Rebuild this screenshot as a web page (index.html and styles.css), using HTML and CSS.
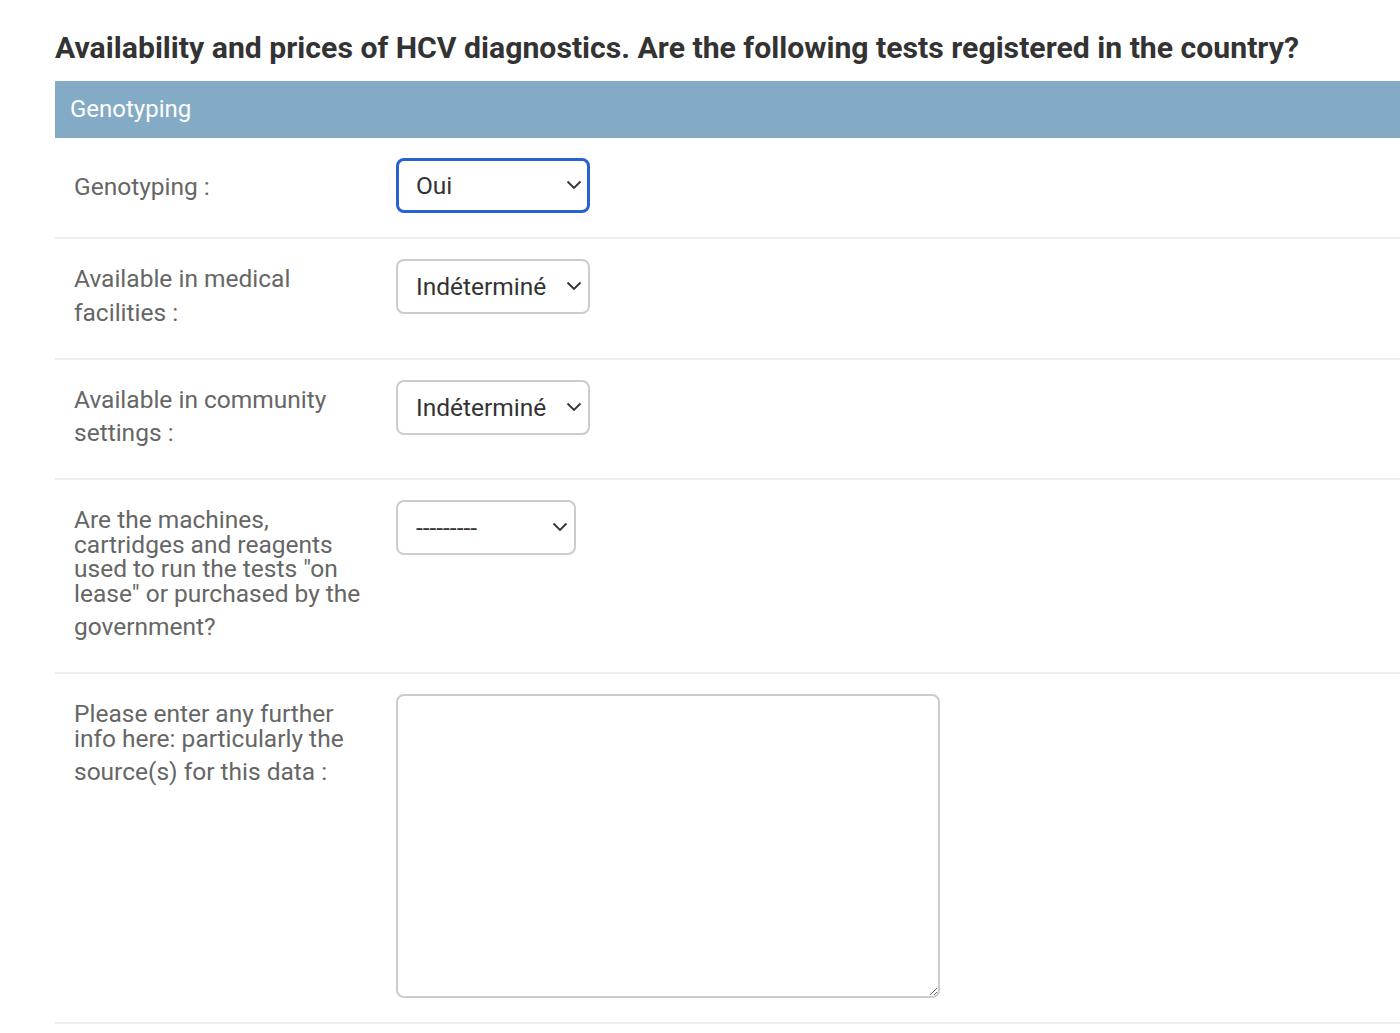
FILE: index.html
```html
<!DOCTYPE html>
<html lang="en">
<head>
<meta charset="utf-8">
<title>HCV diagnostics</title>
<link rel="stylesheet" href="styles.css">
</head>
<body>
<div class="page">
  <h1 class="title">Availability and prices of HCV diagnostics. Are the following tests registered in the country?</h1>
  <fieldset class="module">
    <h2 class="caption">Genotyping</h2>

    <div class="row">
      <label class="label"><span class="l-last">Genotyping :</span></label>
      <div class="select-wrap w194">
        <select class="select focused"><option>Oui</option><option>Non</option><option>Indéterminé</option></select>
        <svg class="chev" viewBox="0 0 16 10" width="16" height="10"><path d="M1.5 1.5 L8 8 L14.5 1.5" fill="none" stroke="#333" stroke-width="1.8"/></svg>
      </div>
    </div>

    <div class="row">
      <label class="label"><span class="l-line">Available in medical</span><span class="l-last">facilities :</span></label>
      <div class="select-wrap w194">
        <select class="select"><option>Indéterminé</option><option>Oui</option><option>Non</option></select>
        <svg class="chev" viewBox="0 0 16 10" width="16" height="10"><path d="M1.5 1.5 L8 8 L14.5 1.5" fill="none" stroke="#333" stroke-width="1.8"/></svg>
      </div>
    </div>

    <div class="row">
      <label class="label"><span class="l-line">Available in community</span><span class="l-last">settings :</span></label>
      <div class="select-wrap w194">
        <select class="select"><option>Indéterminé</option><option>Oui</option><option>Non</option></select>
        <svg class="chev" viewBox="0 0 16 10" width="16" height="10"><path d="M1.5 1.5 L8 8 L14.5 1.5" fill="none" stroke="#333" stroke-width="1.8"/></svg>
      </div>
    </div>

    <div class="row">
      <label class="label"><span class="l-line">Are the machines,</span><span class="l-line">cartridges and reagents</span><span class="l-line">used to run the tests "on</span><span class="l-line">lease" or purchased by the</span><span class="l-last">government?</span></label>
      <div class="select-wrap w180">
        <select class="select"><option>---------</option><option>On lease</option><option>Purchased</option></select>
        <svg class="chev" viewBox="0 0 16 10" width="16" height="10"><path d="M1.5 1.5 L8 8 L14.5 1.5" fill="none" stroke="#333" stroke-width="1.8"/></svg>
      </div>
    </div>

    <div class="row">
      <label class="label"><span class="l-line">Please enter any further</span><span class="l-line">info here: particularly the</span><span class="l-last">source(s) for this data :</span></label>
      <textarea class="textarea"></textarea>
    </div>
  </fieldset>
</div>
</body>
</html>
```
FILE: styles.css
```css
html, body {
  margin: 0;
  padding: 0;
  background: #fff;
}

body {
  font-family: Roboto, "Liberation Sans", Arial, sans-serif;
  color: #333;
}

.page {
  padding: 30px 0 0 55px;
}

.title {
  margin: 0 0 16px 0;
  font-size: 30.2px;
  line-height: 35px;
  font-weight: 700;
  color: #333;
  white-space: nowrap;
}

.module {
  margin: 0;
  padding: 0;
  border: none;
  min-width: 0;
}

.caption {
  margin: 0;
  height: 57px;
  line-height: 57px;
  padding: 0 0 0 15px;
  background: #84abc5;
  color: #fff;
  font-size: 24px;
  font-weight: 400;
}

.row {
  display: flex;
  align-items: flex-start;
  padding: 20px 0 21px 19px;
  border-bottom: 2px solid #eee;
}

.label {
  display: flex;
  flex-direction: column;
  width: 302px;
  flex: 0 0 302px;
  padding: 8px 20px 4px 0;
  font-size: 24.5px;
  color: #666;
}

.l-line {
  display: block;
  line-height: 24.5px;
  white-space: nowrap;
}

.l-last {
  display: block;
  line-height: 41px;
  white-space: nowrap;
}

.select-wrap {
  position: relative;
  margin-bottom: 3px;
}

.w194 { width: 194px; }
.w180 { width: 180px; }

.select {
  appearance: none;
  -webkit-appearance: none;
  display: block;
  width: 100%;
  height: 55px;
  box-sizing: border-box;
  margin: 0;
  padding: 0 30px 0 18px;
  border: 2px solid #ccc;
  border-radius: 8px;
  background: #fff;
  color: #333;
  font-family: Roboto, "Liberation Sans", Arial, sans-serif;
  font-size: 24.5px;
  outline: none;
}

.select.focused {
  border: 3px solid #2762cf;
  padding-left: 17px;
}

.chev {
  position: absolute;
  right: 8px;
  top: 22px;
  pointer-events: none;
}

.textarea {
  display: block;
  width: 544px;
  height: 304px;
  box-sizing: border-box;
  margin: 0 0 3px 0;
  border: 2px solid #ccc;
  border-radius: 8px;
  background: #fff;
  font-family: Roboto, "Liberation Sans", Arial, sans-serif;
  font-size: 24px;
  color: #333;
  resize: both;
  outline: none;
}
```
